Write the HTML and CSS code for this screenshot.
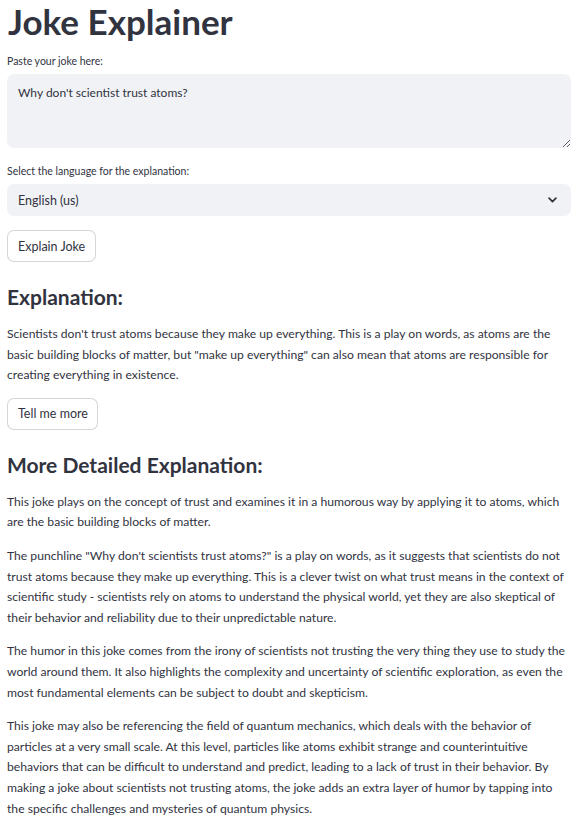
FILE: index.html
```html
<!DOCTYPE html>
<html lang="en">
<head>
<meta charset="utf-8">
<title>Joke Explainer</title>
<link rel="stylesheet" href="styles.css">
</head>
<body>
<main class="app">
  <h1 class="title">Joke Explainer</h1>

  <div class="field field-text">
    <label class="label" for="joke">Paste your joke here:</label>
    <textarea id="joke" class="textarea">Why don't scientist trust atoms?</textarea>
  </div>

  <div class="field field-select">
    <div class="label">Select the language for the explanation:</div>
    <div class="select">
      <span class="select-value">English (us)</span>
      <svg class="chevron" width="9" height="6" viewBox="0 0 9 6" aria-hidden="true">
        <path d="M1.1 1.2 L4.5 4.6 L7.9 1.2" fill="none" stroke="#31333f" stroke-width="1.7" stroke-linecap="round" stroke-linejoin="round"/>
      </svg>
    </div>
  </div>

  <button class="btn btn-explain" type="button">Explain Joke</button>

  <h3 class="heading heading-first">Explanation:</h3>
  <p class="para">Scientists don't trust atoms because they make up everything. This is a play on words, as atoms are the basic building blocks of matter, but "make up everything" can also mean that atoms are responsible for creating everything in existence.</p>

  <button class="btn btn-more" type="button">Tell me more</button>

  <h3 class="heading heading-second">More Detailed Explanation:</h3>
  <p class="para">This joke plays on the concept of trust and examines it in a humorous way by applying it to atoms, which are the basic building blocks of matter.</p>
  <p class="para">The punchline "Why don't scientists trust atoms?" is a play on words, as it suggests that scientists do not trust atoms because they make up everything. This is a clever twist on what trust means in the context of scientific study - scientists rely on atoms to understand the physical world, yet they are also skeptical of their behavior and reliability due to their unpredictable nature.</p>
  <p class="para">The humor in this joke comes from the irony of scientists not trusting the very thing they use to study the world around them. It also highlights the complexity and uncertainty of scientific exploration, as even the most fundamental elements can be subject to doubt and skepticism.</p>
  <p class="para">This joke may also be referencing the field of quantum mechanics, which deals with the behavior of particles at a very small scale. At this level, particles like atoms exhibit strange and counterintuitive behaviors that can be difficult to understand and predict, leading to a lack of trust in their behavior. By making a joke about scientists not trusting atoms, the joke adds an extra layer of humor by tapping into the specific challenges and mysteries of quantum physics.</p>
</main>
</body>
</html>
```

FILE: styles.css
```css
* { box-sizing: border-box; }

html, body {
  margin: 0;
  padding: 0;
  background: #ffffff;
}

body {
  font-family: Lato, "Noto Sans", sans-serif;
  color: #31333f;
  font-size: 12px;
}

.app {
  display: flex;
  flex-direction: column;
  align-items: flex-start;
  padding: 0 7px 0 7px;
  width: 578px;
}

.title {
  margin: 0 0 0 1px;
  font-size: 35px;
  line-height: 43px;
  font-weight: 700;
}

.field {
  display: flex;
  flex-direction: column;
  width: 100%;
}

.field-text { margin-top: 11px; }
.field-select { margin-top: 16px; }

.label {
  font-size: 10.5px;
  line-height: 14px;
  margin: 0 0 6px 0;
}

.textarea {
  display: block;
  width: 100%;
  height: 74px;
  resize: vertical;
  border: none;
  outline: none;
  border-radius: 7px;
  background: #f0f2f6;
  font-family: inherit;
  font-size: 12px;
  line-height: 20px;
  color: #31333f;
  padding: 9px 11px;
}

.select {
  display: flex;
  align-items: center;
  justify-content: space-between;
  width: 100%;
  height: 32px;
  border-radius: 7px;
  background: #f0f2f6;
  padding: 0 14px 0 11px;
  font-size: 12.5px;
}

.chevron { display: block; }

.btn {
  font-family: inherit;
  font-size: 12.5px;
  color: #31333f;
  background: #ffffff;
  border: 1px solid rgba(49, 51, 63, 0.2);
  border-radius: 7px;
  height: 32px;
  padding: 0 10px;
  white-space: nowrap;
  cursor: pointer;
}

.btn-explain { margin-top: 14px; width: 89px; }
.btn-more { margin-top: 12px; width: 91px; }

.heading {
  margin: 0;
  font-size: 21px;
  line-height: 28px;
  font-weight: 700;
}

.heading-first { margin-top: 21px; }
.heading-second { margin-top: 21px; }

.para {
  margin: 13px 0 0 0;
  font-size: 12.15px;
  line-height: 20.6px;
}

.heading + .para { margin-top: 13px; }
```
